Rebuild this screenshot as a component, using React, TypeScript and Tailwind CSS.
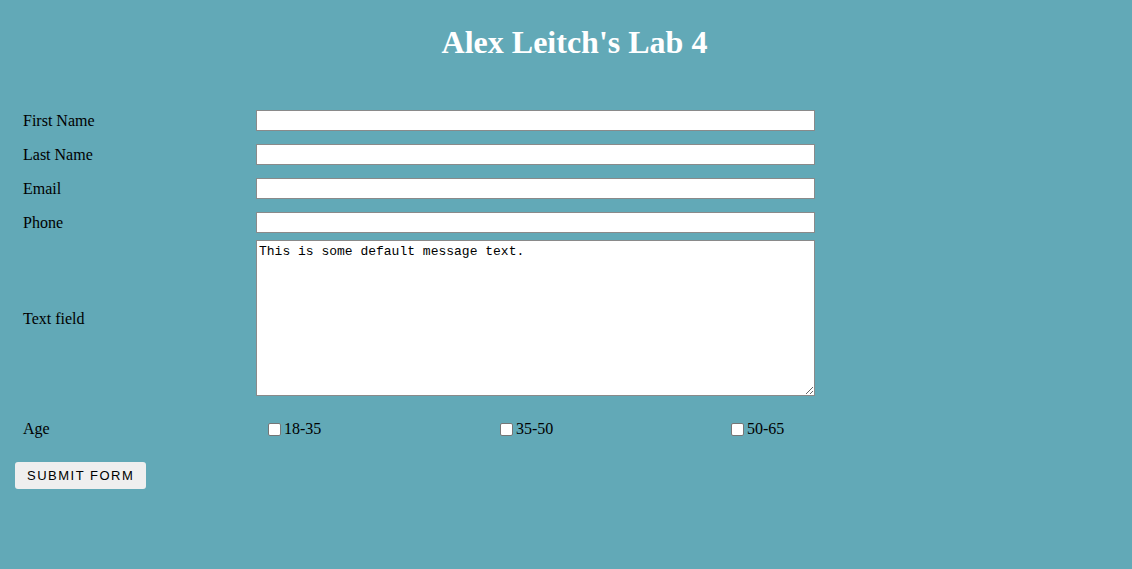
export default function App() {
  const rows = ["First Name", "Last Name", "Email", "Phone"];
  const ages = [
    { label: "18-35", w: "w-[232px]" },
    { label: "35-50", w: "w-[231px]" },
    { label: "50-65", w: "w-[232px]" },
  ];

  return (
    <div
      className="min-h-[569px] bg-[#62a9b7] text-black"
      style={{ fontFamily: '"Liberation Serif", serif' }}
    >
      <div className="pl-[17px] pt-[24px]">
        <h1 className="text-center text-[32px] font-bold leading-[37px] text-white">
          Alex Leitch's Lab 4
        </h1>
      </div>

      <form className="mt-[42px] pl-[23px]">
        {rows.map((label) => (
          <div key={label} className="flex h-[34px] items-center text-[16px]">
            <span className="w-[233px] pt-[2px]">{label}</span>
            <input
              type="text"
              className="h-[21px] w-[559px] border border-[#8a8a8a] bg-white outline-none"
            />
          </div>
        ))}

        <div className="flex items-center py-[1px] text-[16px]">
          <span className="w-[233px] pt-[2px]">Text field</span>
          <textarea
            defaultValue="This is some default message text."
            className="h-[156px] w-[559px] resize border border-[#8a8a8a] bg-white px-[2px] pb-[2px] pt-[3px] text-[13px] leading-[15px] outline-none"
            style={{ fontFamily: '"Liberation Mono", monospace' }}
          />
        </div>

        <div className="mt-[15px] flex h-[34px] items-center text-[16px]">
          <span className="w-[233px]">Age</span>
          {ages.map((a) => (
            <label key={a.label} className={`flex items-center ${a.w}`}>
              <input
                type="checkbox"
                className="ml-[12px] mr-[3px] h-[13px] w-[13px] appearance-none rounded-[2px] border border-[#767676] bg-white"
              />
              <span>{a.label}</span>
            </label>
          ))}
        </div>
      </form>

      <div className="pl-[15px] pt-[16px]">
        <button
          type="button"
          className="h-[27px] rounded-[3px] bg-[#efefef] px-[12px] text-[13px] tracking-[1.5px] text-black"
          style={{ fontFamily: '"Liberation Sans", Arial, sans-serif' }}
        >
          SUBMIT FORM
        </button>
      </div>
    </div>
  );
}
